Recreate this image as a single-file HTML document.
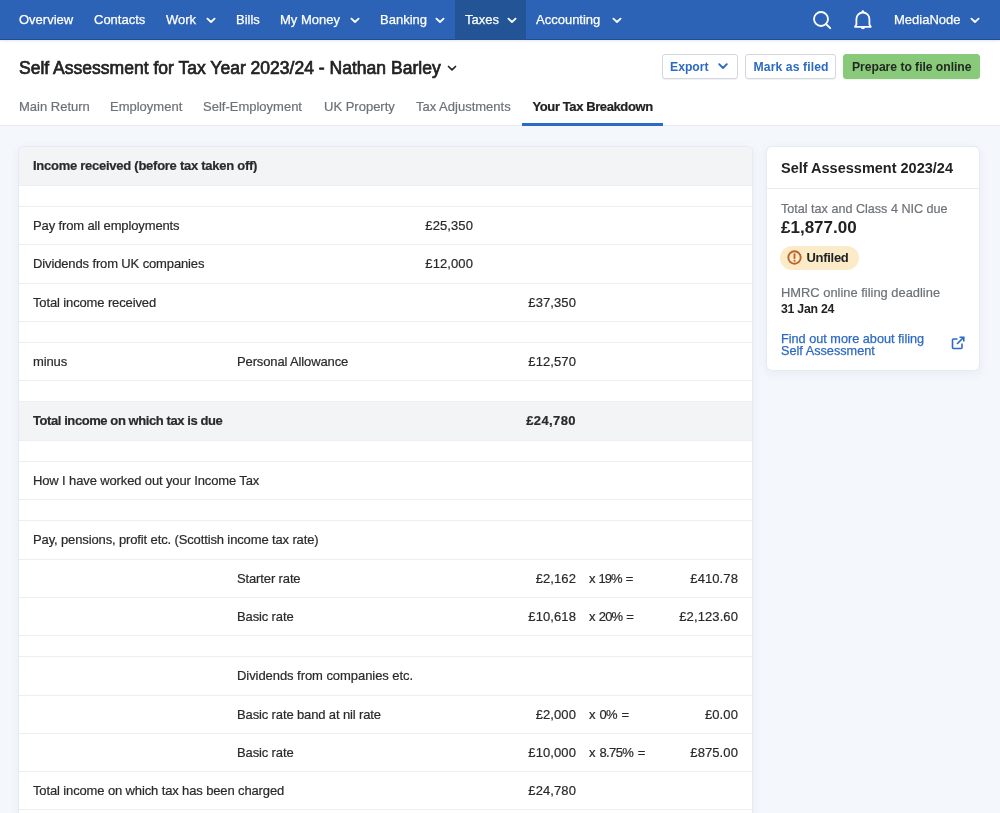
<!DOCTYPE html>
<html><head><meta charset="utf-8">
<style>
#card,#side,#head,#nav{will-change:transform}
.row span{-webkit-text-stroke:0.2px #2a2a2a}
#nav .it{-webkit-text-stroke:0.25px #fff}
.tab{-webkit-text-stroke:0.2px currentColor}

*{box-sizing:border-box;margin:0;padding:0}
html,body{width:1000px;height:813px;overflow:hidden}
body{font-family:"Liberation Sans",sans-serif;background:#f4f7fc;color:#2a2a2a;position:relative;font-size:13px}
.abs{position:absolute;white-space:nowrap}
#nav{position:absolute;left:0;top:0;width:1000px;height:40px;background:#2d63b7;border-bottom:1px solid #1f4e95;box-shadow:0 1px 2px rgba(20,50,100,.12);z-index:2}
#nav .it{position:absolute;top:0;height:39px;line-height:39px;color:#fff;font-size:13px;white-space:nowrap}
#nav .act{position:absolute;left:455px;top:0;width:71px;height:39px;background:#225496}
.chev{position:absolute;width:6px;height:6px;border-right:1.6px solid #fff;border-bottom:1.6px solid #fff;transform:rotate(45deg)}
#head{position:absolute;left:0;top:40px;width:1000px;height:86px;background:#fff;border-bottom:1px solid #e8eaee}
.title{position:absolute;left:19px;top:16px;font-size:17.55px;line-height:24px;color:#222;-webkit-text-stroke:0.7px #222;white-space:nowrap}
.btn{position:absolute;top:14px;height:25px;box-shadow:0 1px 0 rgba(0,0,0,.05);border:1px solid #d3d7dd;border-radius:3px;background:#fff;color:#2e6ac4;font-weight:bold;font-size:12.2px;line-height:25px;white-space:nowrap}
.tab{position:absolute;top:59px;font-size:13px;color:#6d7278;white-space:nowrap;line-height:16px}
#card{position:absolute;left:19px;top:147px;width:733px;height:700px;background:#fff;border-radius:5px;box-shadow:0 0 0 1px #e7eaef,0 3px 10px 2px rgba(40,70,140,.05);overflow:hidden}
.row{position:absolute;left:0;width:733px;border-top:1px solid #eceef1}
.row span{position:absolute;white-space:nowrap;top:50%;line-height:16px;margin-top:-8px;letter-spacing:-0.13px}
.row span.n{letter-spacing:0.1px}
.row span.b{letter-spacing:-0.33px}
.row span.n.b{letter-spacing:0.4px}
.hdr{background:#f3f4f6}
.b{font-weight:bold;letter-spacing:-0.24px}
#side{position:absolute;left:767px;top:147px;width:212px;height:223px;background:#fff;border-radius:5px;box-shadow:0 0 0 1px #e7eaef,0 3px 10px 2px rgba(40,70,140,.05)}
</style></head><body>
<div id="nav">
  <div class="act"></div>
  <div class="it" style="left:19px">Overview</div>
  <div class="it" style="left:94px">Contacts</div>
  <div class="it" style="left:166px">Work</div><svg class="abs" style="left:205.5px;top:17px" width="10" height="7" viewBox="0 0 10 7"><path d="M1.4 1.6L5 5L8.6 1.6" fill="none" stroke="#fff" stroke-width="1.8" stroke-linecap="round" stroke-linejoin="round"/></svg>
  <div class="it" style="left:236px">Bills</div>
  <div class="it" style="left:280px">My Money</div><svg class="abs" style="left:350px;top:17px" width="10" height="7" viewBox="0 0 10 7"><path d="M1.4 1.6L5 5L8.6 1.6" fill="none" stroke="#fff" stroke-width="1.8" stroke-linecap="round" stroke-linejoin="round"/></svg>
  <div class="it" style="left:380px">Banking</div><svg class="abs" style="left:435px;top:17px" width="10" height="7" viewBox="0 0 10 7"><path d="M1.4 1.6L5 5L8.6 1.6" fill="none" stroke="#fff" stroke-width="1.8" stroke-linecap="round" stroke-linejoin="round"/></svg>
  <div class="it" style="left:465px">Taxes</div><svg class="abs" style="left:506.5px;top:17px" width="10" height="7" viewBox="0 0 10 7"><path d="M1.4 1.6L5 5L8.6 1.6" fill="none" stroke="#fff" stroke-width="1.8" stroke-linecap="round" stroke-linejoin="round"/></svg>
  <div class="it" style="left:536px">Accounting</div><svg class="abs" style="left:611.5px;top:17px" width="10" height="7" viewBox="0 0 10 7"><path d="M1.4 1.6L5 5L8.6 1.6" fill="none" stroke="#fff" stroke-width="1.8" stroke-linecap="round" stroke-linejoin="round"/></svg>
  <svg class="abs" style="left:812px;top:10px" width="20" height="20" viewBox="0 0 20 20"><circle cx="9" cy="9" r="7" fill="none" stroke="#fff" stroke-width="1.8"/><line x1="14" y1="14" x2="18.2" y2="18.2" stroke="#fff" stroke-width="1.9" stroke-linecap="round"/></svg>
  <svg class="abs" style="left:853px;top:9px" width="20" height="22" viewBox="0 0 20 22"><path d="M2 17.8L3.4 15.6V10A6.5 6.5 0 0 1 16.4 10V15.6L17.8 17.8Z" fill="none" stroke="#fff" stroke-width="1.8" stroke-linejoin="round"/><path d="M7.8 18.2a2.1 2.1 0 0 0 4.2 0z" fill="#fff"/><circle cx="9.9" cy="2.6" r="1.3" fill="#fff"/></svg>
  <div class="it" style="left:894px">MediaNode</div><svg class="abs" style="left:970px;top:17px" width="10" height="7" viewBox="0 0 10 7"><path d="M1.4 1.6L5 5L8.6 1.6" fill="none" stroke="#fff" stroke-width="1.8" stroke-linecap="round" stroke-linejoin="round"/></svg>
</div>

<div id="head">
  <div class="title">Self Assessment for Tax Year 2023/24 - Nathan Barley</div>
  <svg class="abs" style="left:447px;top:24.8px" width="10" height="7" viewBox="0 0 10 7"><path d="M1.5 1.5L5 4.8L8.5 1.5" fill="none" stroke="#222" stroke-width="1.7" stroke-linecap="round" stroke-linejoin="round"/></svg>
  <div class="btn" style="left:662px;width:76px;padding-left:7px">Export</div><svg class="abs" style="left:718px;top:23px" width="10" height="7" viewBox="0 0 10 7"><path d="M1.2 1.2L5 5L8.8 1.2" fill="none" stroke="#2e6ac4" stroke-width="1.9" stroke-linecap="round" stroke-linejoin="round"/></svg>
  <div class="btn" style="left:745px;width:91px;padding-left:7.5px;letter-spacing:0.1px">Mark as filed</div>
  <div class="btn" style="left:843px;width:137px;padding-left:8px;background:#88c97a;border-color:#88c97a;color:#222a22;letter-spacing:-0.05px">Prepare to file online</div>
  <div class="tab" style="left:19px">Main Return</div>
  <div class="tab" style="left:110px">Employment</div>
  <div class="tab" style="left:203px">Self-Employment</div>
  <div class="tab" style="left:324px">UK Property</div>
  <div class="tab" style="left:416px">Tax Adjustments</div>
  <div class="tab" style="left:532.5px;color:#222;font-weight:bold;letter-spacing:-0.4px">Your Tax Breakdown</div>
  <div class="abs" style="left:522px;top:83px;width:141px;height:3px;background:#2e6ac4"></div>
</div>

<div id="card">
  <div class="row hdr" style="top:0;height:38px;border-top:none"><span class="b" style="left:14px;letter-spacing:-0.26px">Income received (before tax taken off)</span></div>
  <div class="row" style="top:38px;height:21px"></div>
  <div class="row" style="top:59px;height:38px"><span style="left:14px">Pay from all employments</span><span class="n" style="right:279px">£25,350</span></div>
  <div class="row" style="top:97px;height:39px"><span style="left:14px">Dividends from UK companies</span><span class="n" style="right:279px">£12,000</span></div>
  <div class="row" style="top:136px;height:38px"><span style="left:14px">Total income received</span><span class="n" style="right:176px">£37,350</span></div>
  <div class="row" style="top:174px;height:21px"></div>
  <div class="row" style="top:195px;height:38px"><span style="left:14px">minus</span><span style="left:218px">Personal Allowance</span><span class="n" style="right:176px">£12,570</span></div>
  <div class="row" style="top:233px;height:21px"></div>
  <div class="row hdr" style="top:254px;height:39px"><span class="b" style="left:14px;letter-spacing:-0.42px">Total income on which tax is due</span><span class="n b" style="right:176px">£24,780</span></div>
  <div class="row" style="top:293px;height:21px"></div>
  <div class="row" style="top:314px;height:38px"><span style="left:14px">How I have worked out your Income Tax</span></div>
  <div class="row" style="top:352px;height:21px"></div>
  <div class="row" style="top:373px;height:39px"><span style="left:14px">Pay, pensions, profit etc. (Scottish income tax rate)</span></div>
  <div class="row" style="top:412px;height:38px"><span style="left:218px">Starter rate</span><span class="n" style="right:176px">£2,162</span><span style="left:570px;letter-spacing:-1px;word-spacing:1.5px">x 19% =</span><span class="n" style="right:14px">£410.78</span></div>
  <div class="row" style="top:450px;height:38px"><span style="left:218px">Basic rate</span><span class="n" style="right:176px">£10,618</span><span style="left:570px;letter-spacing:-0.9px;word-spacing:1.5px">x 20% =</span><span class="n" style="right:14px">£2,123.60</span></div>
  <div class="row" style="top:488px;height:21px"></div>
  <div class="row" style="top:509px;height:39px"><span style="left:218px;letter-spacing:-0.06px">Dividends from companies etc.</span></div>
  <div class="row" style="top:548px;height:38px"><span style="left:218px">Basic rate band at nil rate</span><span class="n" style="right:176px">£2,000</span><span style="left:570px;letter-spacing:-0.6px;word-spacing:1.5px">x 0% =</span><span class="n" style="right:14px">£0.00</span></div>
  <div class="row" style="top:586px;height:38px"><span style="left:218px">Basic rate</span><span class="n" style="right:176px">£10,000</span><span style="left:570px;letter-spacing:-0.6px;word-spacing:1.5px">x 8.75% =</span><span class="n" style="right:14px">£875.00</span></div>
  <div class="row" style="top:624px;height:38px"><span style="left:14px">Total income on which tax has been charged</span><span class="n" style="right:176px">£24,780</span></div>
  <div class="row" style="top:662px;height:38px"></div>
</div>

<div id="side">
  <div class="abs" style="left:14px;top:12px;font-size:14.5px;line-height:18px;color:#222;font-weight:bold;letter-spacing:0px">Self Assessment 2023/24</div>
  <div class="abs" style="left:0;top:41px;width:212px;height:1px;background:#e9ebee"></div>
  <div class="abs" style="left:14px;top:55px;font-size:12.6px;line-height:14px;color:#6d7278;-webkit-text-stroke:0.2px #6d7278">Total tax and Class 4 NIC due</div>
  <div class="abs" style="left:14px;top:71px;font-size:17px;line-height:20px;font-weight:bold;color:#222">£1,877.00</div>
  <div class="abs" style="left:13px;top:99px;width:79px;height:24px;border-radius:12px;background:#fcebc9"></div>
  <svg class="abs" style="left:20px;top:103px" width="15" height="15" viewBox="0 0 15 15"><circle cx="7.5" cy="7.5" r="6.2" fill="none" stroke="#c0612b" stroke-width="1.9"/><line x1="7.5" y1="4.2" x2="7.5" y2="8.2" stroke="#c0612b" stroke-width="1.8" stroke-linecap="round"/><circle cx="7.5" cy="10.7" r="1" fill="#c0612b"/></svg>
  <div class="abs" style="left:39.5px;top:103px;font-size:13px;line-height:15px;color:#222;font-weight:bold;letter-spacing:-0.3px">Unfiled</div>
  <div class="abs" style="left:14px;top:138px;font-size:12.9px;line-height:15px;color:#6d7278;-webkit-text-stroke:0.2px #6d7278">HMRC online filing deadline</div>
  <div class="abs b" style="left:14px;top:155px;font-size:12.3px;line-height:15px;color:#222">31 Jan 24</div>
  <div class="abs" style="left:14px;top:185.5px;font-size:12.7px;line-height:12.2px;color:#2e6ac4;white-space:normal;width:160px;-webkit-text-stroke:0.25px #2e6ac4">Find out more about filing<br>Self Assessment</div>
  <svg class="abs" style="left:184px;top:189px" width="14" height="14" viewBox="0 0 14 14"><path d="M11 7.5v4a1 1 0 0 1-1 1H2.5a1 1 0 0 1-1-1V4a1 1 0 0 1 1-1h4" fill="none" stroke="#2e6ac4" stroke-width="1.6"/><path d="M8.5 1.2h4.3v4.3M12.6 1.4L6 8" fill="none" stroke="#2e6ac4" stroke-width="1.6"/></svg>
</div>
</body></html>
